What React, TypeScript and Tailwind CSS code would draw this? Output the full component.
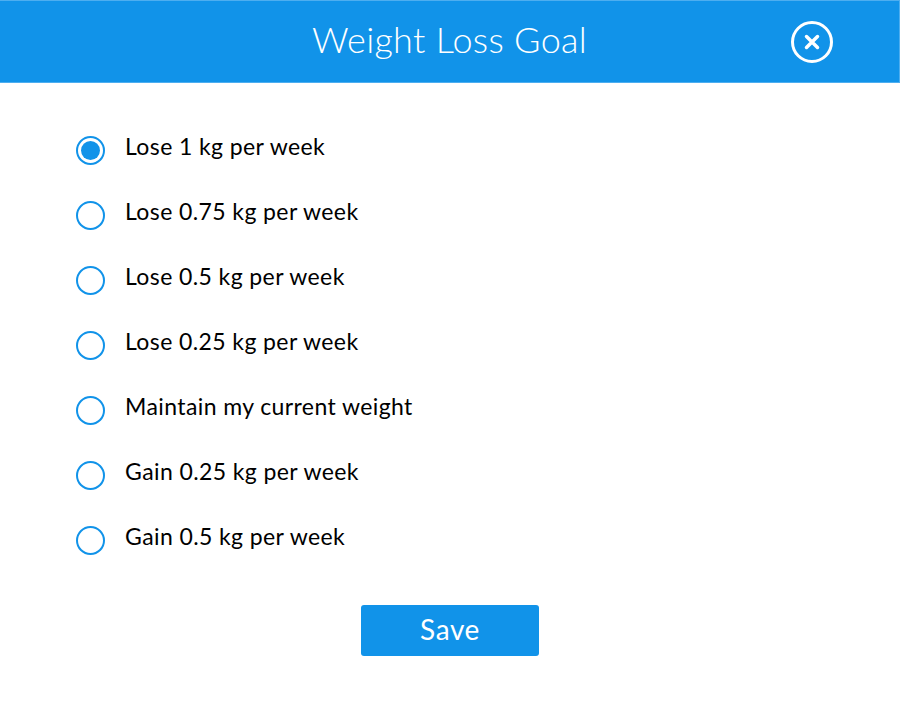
import React, { useState } from 'react';

const options = [
  'Lose 1 kg per week',
  'Lose 0.75 kg per week',
  'Lose 0.5 kg per week',
  'Lose 0.25 kg per week',
  'Maintain my current weight',
  'Gain 0.25 kg per week',
  'Gain 0.5 kg per week',
];

// 单选按钮
function Radio({ checked }: { checked: boolean }) {
  return (
    <span className="w-[29px] h-[29px] rounded-full border-2 border-[#1193e9] flex items-center justify-center shrink-0">
      {checked && <span className="w-[19px] h-[19px] rounded-full bg-[#1193e9]" />}
    </span>
  );
}

export default function App() {
  const [selected, setSelected] = useState(0);

  return (
    <div className="w-[901px] h-[708px] bg-white font-['Lato','Noto_Sans',sans-serif] text-black">
      {/* 标题栏 */}
      <div className="w-[900px] h-[83px] bg-[#1193e9] border-t border-b border-r border-t-[#4daef0] border-b-[#4daef0] border-r-[#4daef0] flex items-center justify-center relative">
        <h1 className="text-[36px] font-light text-white tracking-[0.3px] leading-none mt-[-6px]">Weight Loss Goal</h1>
        <button className="absolute left-[790px] top-[19px] w-[44px] h-[44px]">
          <svg viewBox="0 0 44 44" width="44" height="44" fill="none" stroke="white">
            <circle cx="22" cy="22" r="19.5" strokeWidth="3" />
            <path d="M16.5 16.5 L27.5 27.5 M27.5 16.5 L16.5 27.5" strokeWidth="3.5" strokeLinecap="round" />
          </svg>
        </button>
      </div>

      {/* 选项列表 */}
      <div className="pt-[35px] pl-[76px] flex flex-col">
        {options.map((label, i) => (
          <label
            key={label}
            onClick={() => setSelected(i)}
            className="h-[65px] flex items-center gap-[20px] cursor-pointer"
          >
            <Radio checked={selected === i} />
            <span className="text-[23px] tracking-[0.4px] leading-none mt-[-8px]">{label}</span>
          </label>
        ))}
      </div>

      {/* 保存按钮 */}
      <div className="flex justify-center pt-[32px] pr-[1px]">
        <button className="w-[178px] h-[51px] rounded-[3px] bg-[#1193e9] text-white text-[28px] tracking-[0.6px] leading-none pb-[3px]">
          Save
        </button>
      </div>
    </div>
  );
}
